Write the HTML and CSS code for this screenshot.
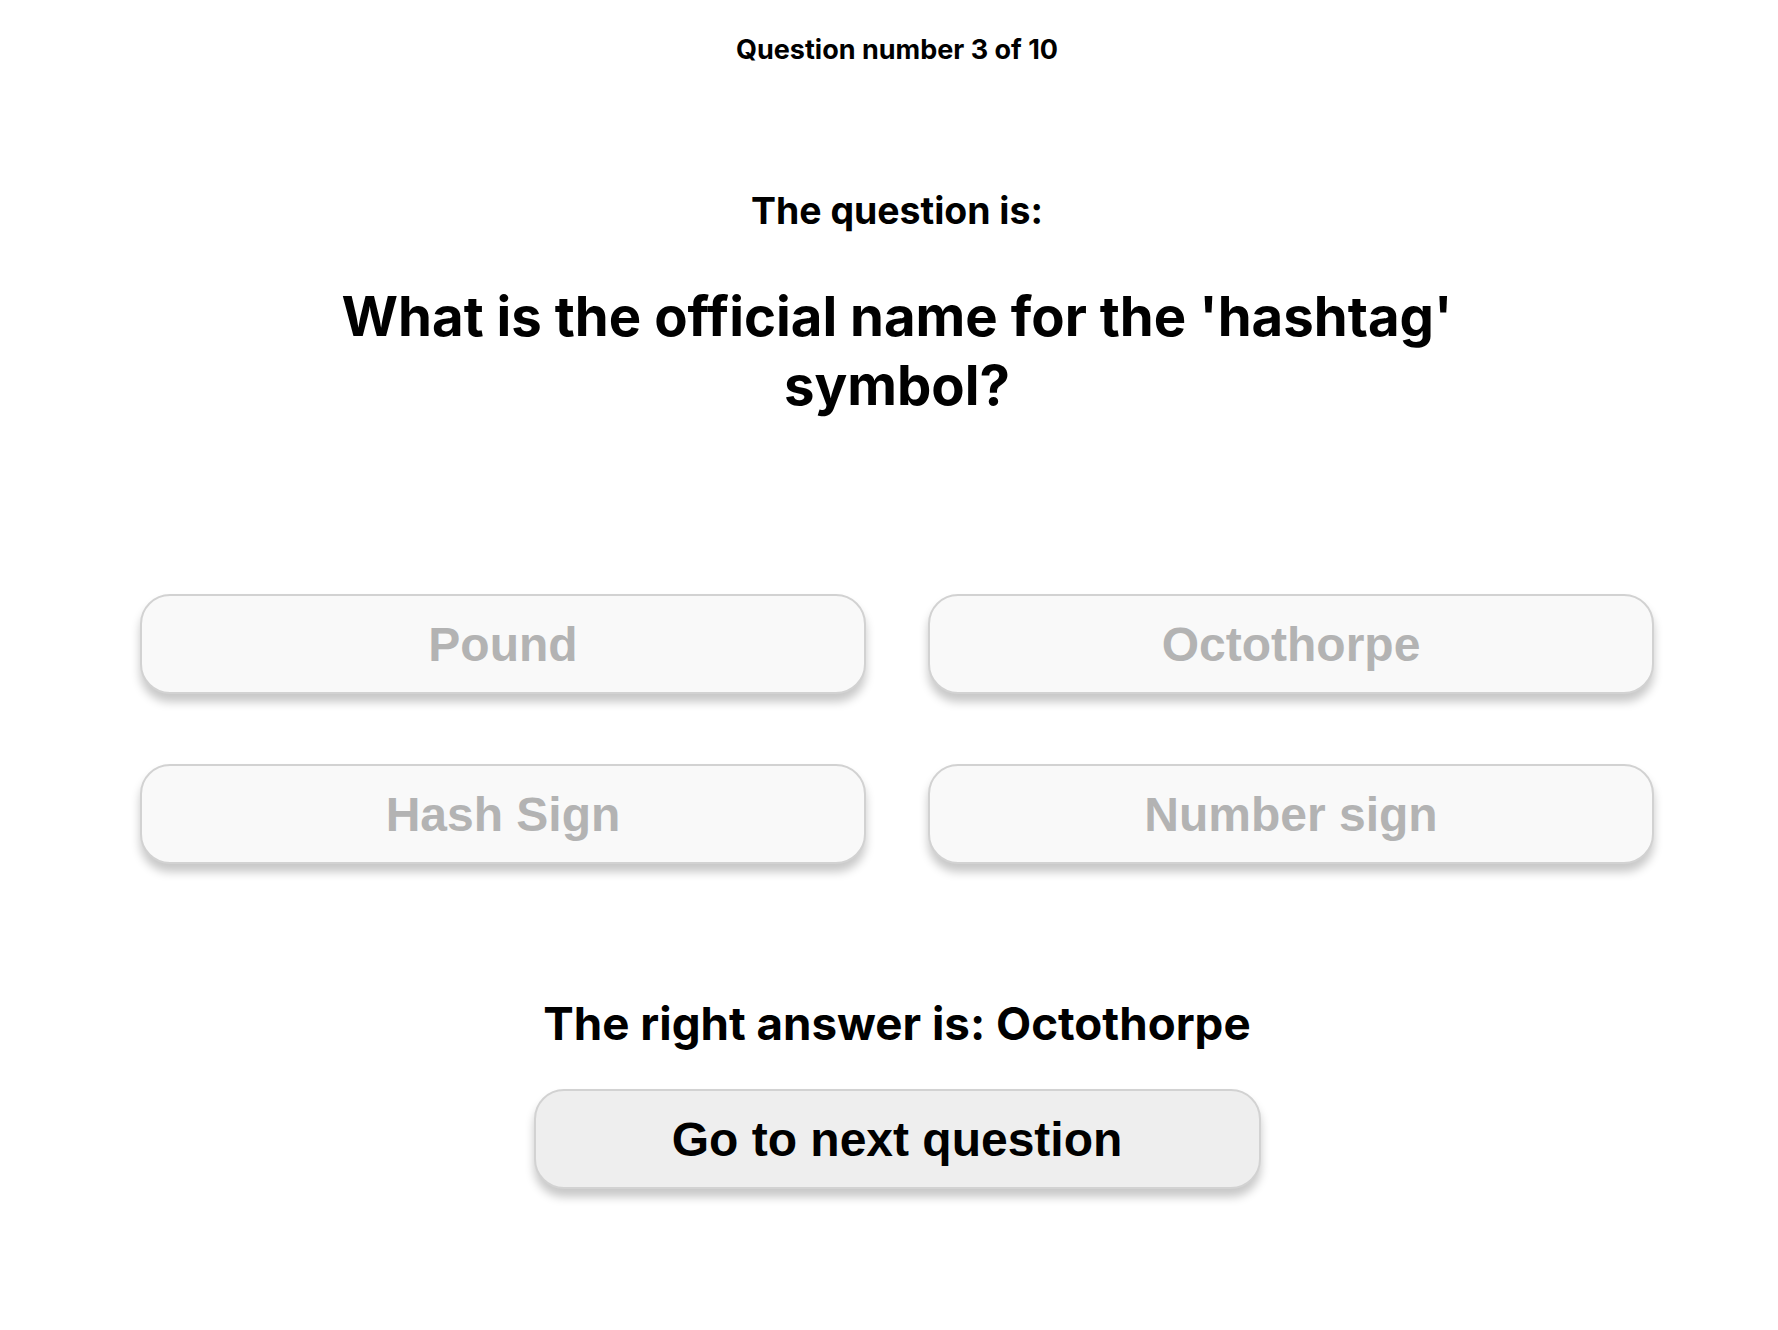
FILE: index.html
```html
<!DOCTYPE html>
<html lang="en">
<head>
<meta charset="utf-8">
<title>Quiz</title>
<link rel="stylesheet" href="styles.css">
</head>
<body>
<main class="quiz">
  <p class="counter">Question number 3 of 10</p>
  <h2 class="prompt">The question is:</h2>
  <h1 class="question">What is the official name for the 'hashtag' symbol?</h1>
  <div class="answers">
    <button class="answer" disabled>Pound</button>
    <button class="answer" disabled>Octothorpe</button>
    <button class="answer" disabled>Hash Sign</button>
    <button class="answer" disabled>Number sign</button>
  </div>
  <p class="result">The right answer is: Octothorpe</p>
  <button class="next">Go to next question</button>
</main>
</body>
</html>
```

FILE: styles.css
```css
html, body {
  margin: 0;
  padding: 0;
  background: #ffffff;
}

.quiz {
  padding: 0 0 60px 16px;
  display: flex;
  flex-direction: column;
  align-items: center;
  font-family: Inter, "Noto Sans", sans-serif;
  color: #000;
  text-align: center;
}

.counter {
  margin: 33px 0 0;
  font-size: 27px;
  font-weight: 700;
  line-height: 34px;
}

.prompt {
  margin: 122px 0 0;
  font-size: 37.4px;
  font-weight: 700;
  line-height: 44px;
}

.question {
  margin: 49px 0 0;
  max-width: 1150px;
  font-size: 54.5px;
  font-weight: 700;
  line-height: 69px;
}

.answers {
  margin-top: 174px;
  display: grid;
  grid-template-columns: 726px 726px;
  column-gap: 62px;
  row-gap: 70px;
}

.answer,
.next {
  height: 100px;
  border: 2px solid #d2d2d2;
  border-radius: 30px;
  font-family: "Liberation Sans", Arial, sans-serif;
  font-weight: 700;
  font-size: 48px;
  box-shadow: 0 8px 10px rgba(0, 0, 0, 0.22);
  padding: 0;
}

.answer {
  background: #f9f9f9;
  color: #b3b3b3;
}

.result {
  margin: 132px 0 0;
  font-size: 45.7px;
  font-weight: 700;
  line-height: 56px;
}

.next {
  margin-top: 37px;
  width: 727px;
  background: #eeeeee;
  color: #000;
}
```
